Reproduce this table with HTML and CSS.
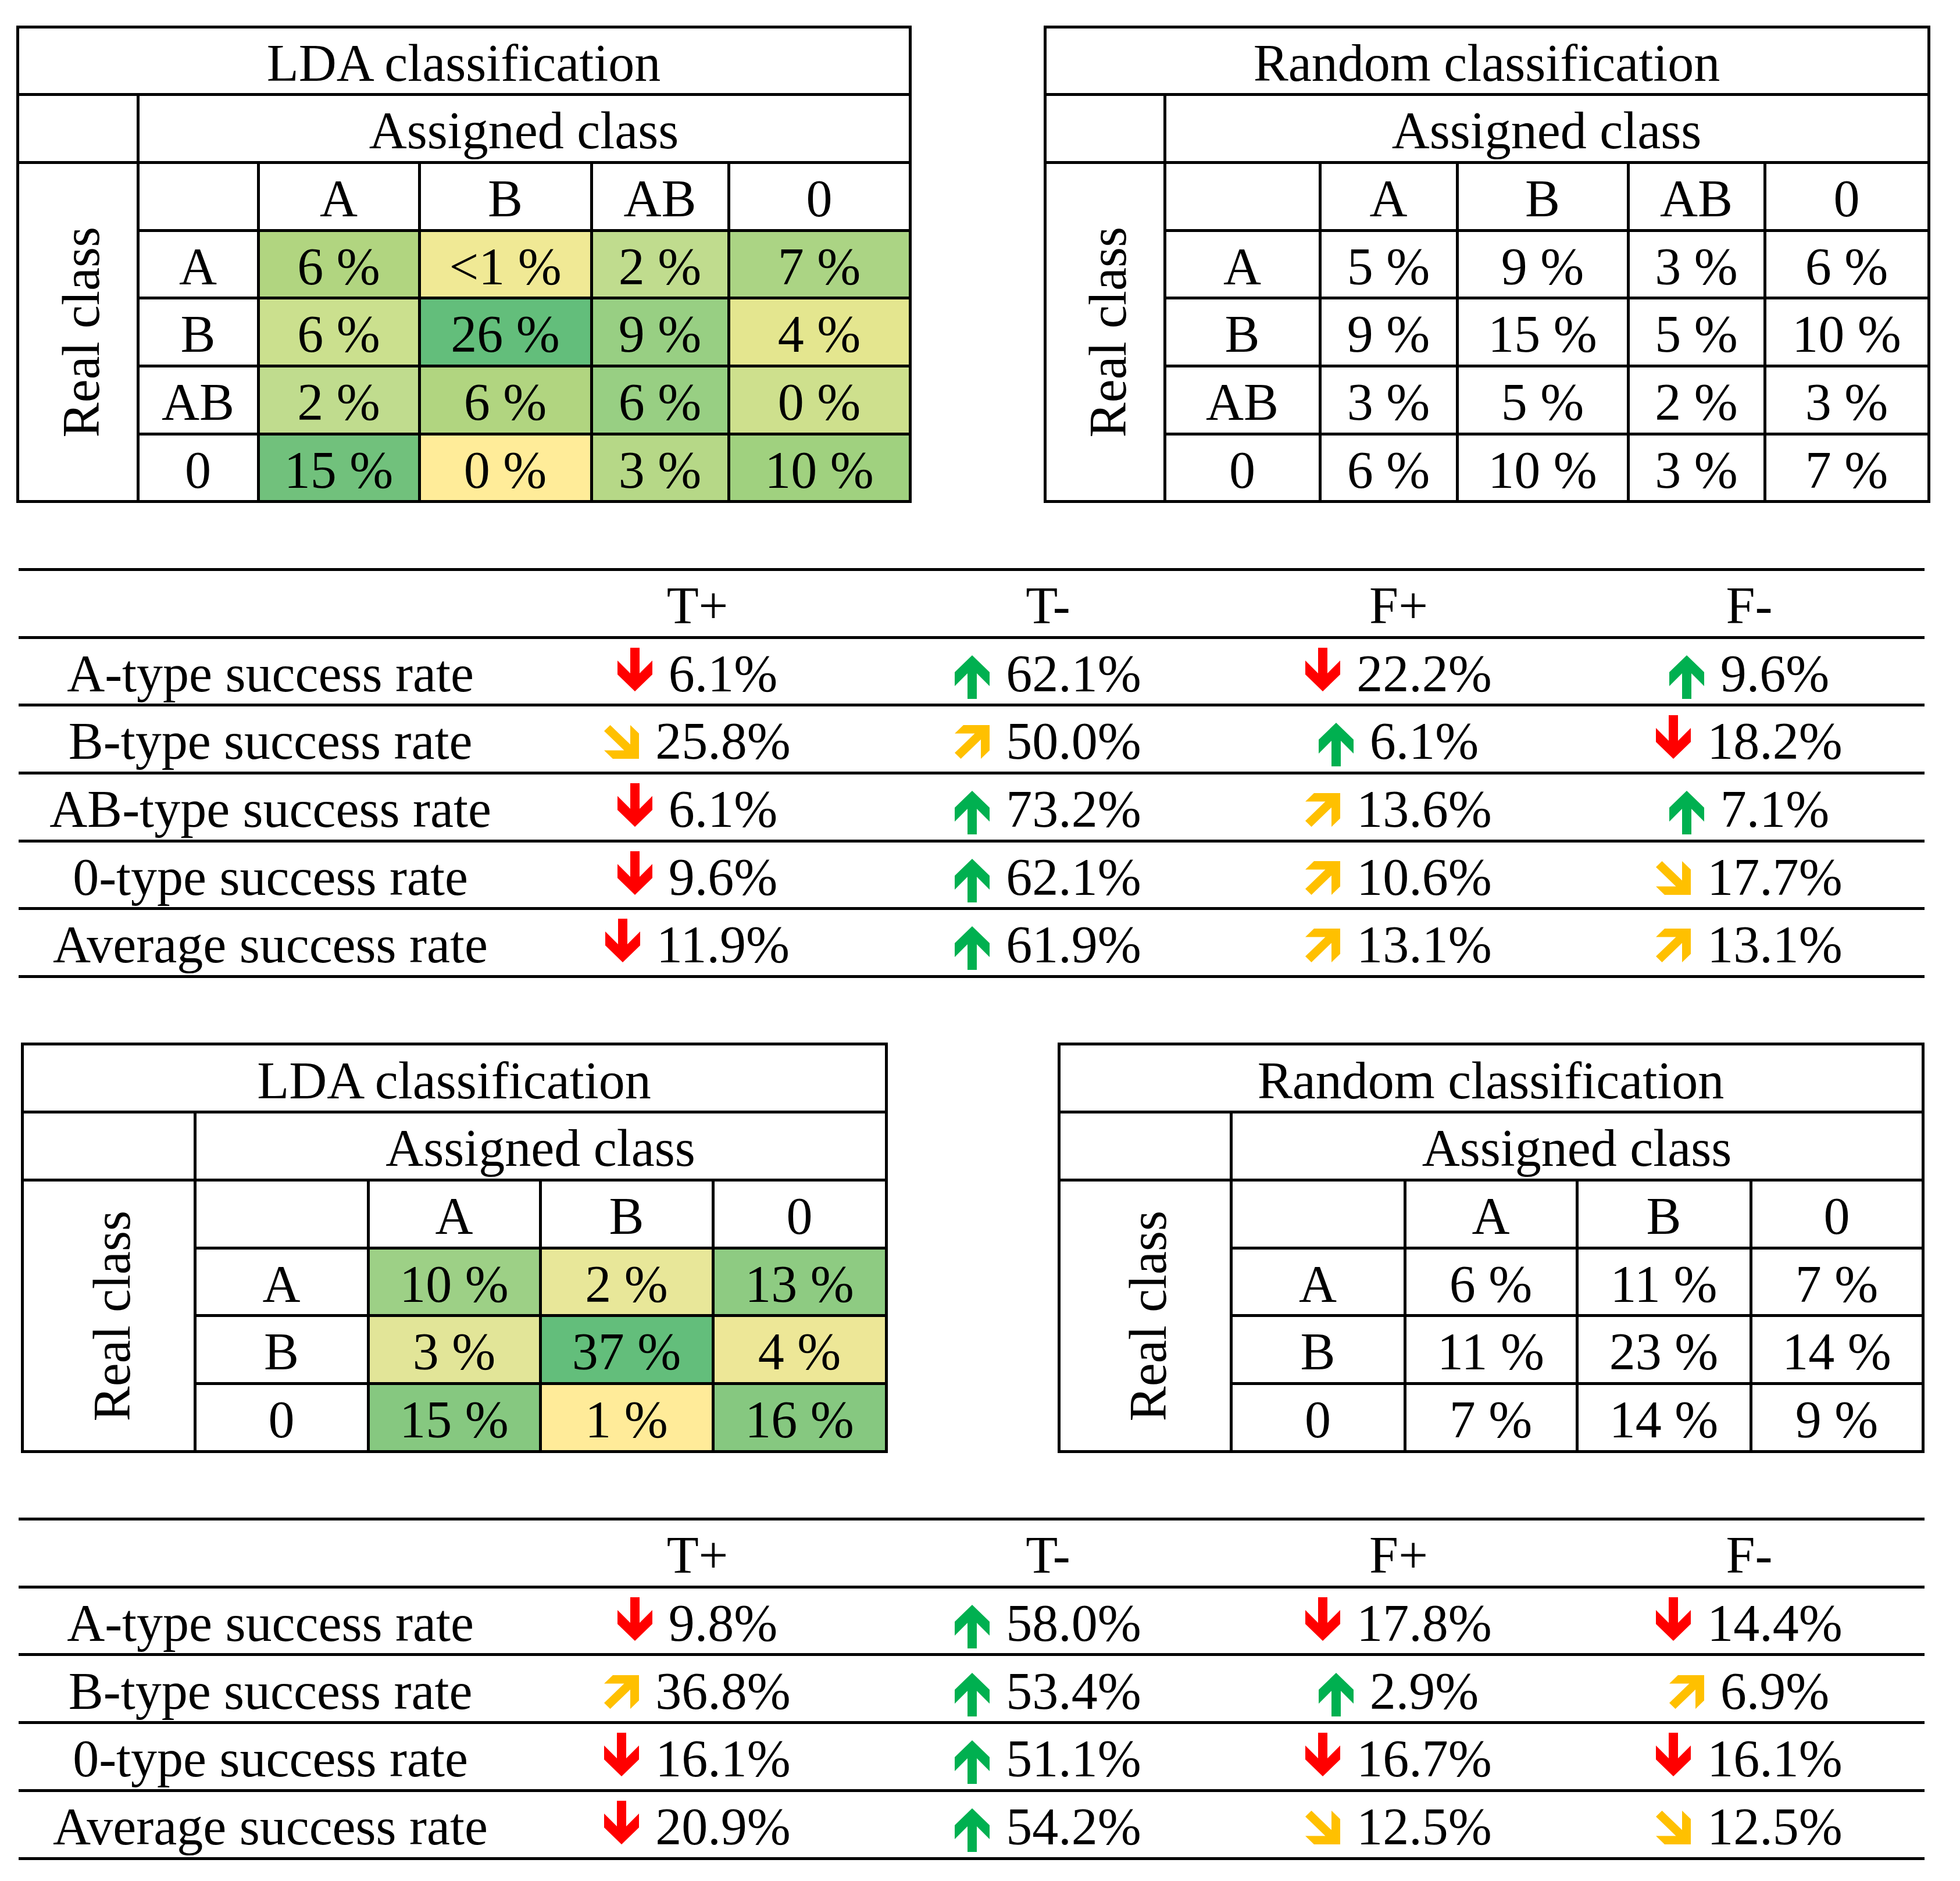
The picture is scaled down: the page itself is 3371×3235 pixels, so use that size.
FILE: index.html
```html
<!DOCTYPE html>
<html lang="en">
<head>
<meta charset="utf-8">
<title>Classification results</title>
<link rel="stylesheet" href="styles.css">
</head>
<body>
<svg class="defs" width="0" height="0" aria-hidden="true">
  <symbol id="a-dn" viewBox="0 0 60 75"><path d="M22 0H38V44L60 22V46L30 75L0 46V22L22 44Z"/></symbol>
  <symbol id="a-up" viewBox="0 0 60 75"><path d="M30 0L60 29V53L38 31V75H22V31L0 53V29Z"/></symbol>
  <symbol id="a-dr" viewBox="0 0 60 60" preserveAspectRatio="none"><path d="M10.5 0L45 34.5V0L60 15V60H15L0 45H34.5L0 10.5Z"/></symbol>
  <symbol id="a-ur" viewBox="0 0 60 60" preserveAspectRatio="none"><path d="M10.5 60L45 25.5V60L60 45V0H15L0 15H34.5L0 49.5Z"/></symbol>
</svg>

<main class="page">
  <section class="pair pair-top">
    <div class="matrix m4 lda1">
      <div class="c title">LDA classification</div>
      <div class="c blank"></div>
      <div class="c assigned">Assigned class</div>
      <div class="c real"><span>Real class</span></div>
      <div class="c"></div><div class="c">A</div><div class="c">B</div><div class="c">AB</div><div class="c">0</div>
      <div class="c">A</div><div class="c bg-b1d580">6 %</div><div class="c bg-f0e995">&lt;1 %</div><div class="c bg-c0dc8e">2 %</div><div class="c bg-abd484">7 %</div>
      <div class="c">B</div><div class="c bg-cbe08e">6 %</div><div class="c bg-63be7b">26 %</div><div class="c bg-98cf83">9 %</div><div class="c bg-e4e68f">4 %</div>
      <div class="c">AB</div><div class="c bg-c0dc8e">2 %</div><div class="c bg-b1d580">6 %</div><div class="c bg-98cf83">6 %</div><div class="c bg-cee08d">0 %</div>
      <div class="c">0</div><div class="c bg-71c17c">15 %</div><div class="c bg-ffec99">0 %</div><div class="c bg-b6d887">3 %</div><div class="c bg-a0d17f">10 %</div>
    </div>
    <div class="matrix m4 rnd1">
      <div class="c title">Random classification</div>
      <div class="c blank"></div>
      <div class="c assigned">Assigned class</div>
      <div class="c real"><span>Real class</span></div>
      <div class="c"></div><div class="c">A</div><div class="c">B</div><div class="c">AB</div><div class="c">0</div>
      <div class="c">A</div><div class="c">5 %</div><div class="c">9 %</div><div class="c">3 %</div><div class="c">6 %</div>
      <div class="c">B</div><div class="c">9 %</div><div class="c">15 %</div><div class="c">5 %</div><div class="c">10 %</div>
      <div class="c">AB</div><div class="c">3 %</div><div class="c">5 %</div><div class="c">2 %</div><div class="c">3 %</div>
      <div class="c">0</div><div class="c">6 %</div><div class="c">10 %</div><div class="c">3 %</div><div class="c">7 %</div>
    </div>
  </section>

  <section class="metrics m6">
    <div class="c"></div><div class="c">T+</div><div class="c">T-</div><div class="c">F+</div><div class="c">F-</div>

    <div class="c">A-type success rate</div>
    <div class="c"><span class="v"><svg class="ar dn"><use href="#a-dn"/></svg>6.1%</span></div>
    <div class="c"><span class="v"><svg class="ar up"><use href="#a-up"/></svg>62.1%</span></div>
    <div class="c"><span class="v"><svg class="ar dn"><use href="#a-dn"/></svg>22.2%</span></div>
    <div class="c"><span class="v"><svg class="ar up"><use href="#a-up"/></svg>9.6%</span></div>

    <div class="c">B-type success rate</div>
    <div class="c"><span class="v"><svg class="ar dr"><use href="#a-dr"/></svg>25.8%</span></div>
    <div class="c"><span class="v"><svg class="ar ur"><use href="#a-ur"/></svg>50.0%</span></div>
    <div class="c"><span class="v"><svg class="ar up"><use href="#a-up"/></svg>6.1%</span></div>
    <div class="c"><span class="v"><svg class="ar dn"><use href="#a-dn"/></svg>18.2%</span></div>

    <div class="c">AB-type success rate</div>
    <div class="c"><span class="v"><svg class="ar dn"><use href="#a-dn"/></svg>6.1%</span></div>
    <div class="c"><span class="v"><svg class="ar up"><use href="#a-up"/></svg>73.2%</span></div>
    <div class="c"><span class="v"><svg class="ar ur"><use href="#a-ur"/></svg>13.6%</span></div>
    <div class="c"><span class="v"><svg class="ar up"><use href="#a-up"/></svg>7.1%</span></div>

    <div class="c">0-type success rate</div>
    <div class="c"><span class="v"><svg class="ar dn"><use href="#a-dn"/></svg>9.6%</span></div>
    <div class="c"><span class="v"><svg class="ar up"><use href="#a-up"/></svg>62.1%</span></div>
    <div class="c"><span class="v"><svg class="ar ur"><use href="#a-ur"/></svg>10.6%</span></div>
    <div class="c"><span class="v"><svg class="ar dr"><use href="#a-dr"/></svg>17.7%</span></div>

    <div class="c">Average success rate</div>
    <div class="c"><span class="v"><svg class="ar dn"><use href="#a-dn"/></svg>11.9%</span></div>
    <div class="c"><span class="v"><svg class="ar up"><use href="#a-up"/></svg>61.9%</span></div>
    <div class="c"><span class="v"><svg class="ar ur"><use href="#a-ur"/></svg>13.1%</span></div>
    <div class="c"><span class="v"><svg class="ar ur"><use href="#a-ur"/></svg>13.1%</span></div>
  </section>

  <section class="pair pair-bottom">
    <div class="matrix m3 lda2">
      <div class="c title">LDA classification</div>
      <div class="c blank"></div>
      <div class="c assigned">Assigned class</div>
      <div class="c real"><span>Real class</span></div>
      <div class="c"></div><div class="c">A</div><div class="c">B</div><div class="c">0</div>
      <div class="c">A</div><div class="c bg-9dd086">10 %</div><div class="c bg-e8e799">2 %</div><div class="c bg-8ecb82">13 %</div>
      <div class="c">B</div><div class="c bg-e2e598">3 %</div><div class="c bg-63be7b">37 %</div><div class="c bg-ede797">4 %</div>
      <div class="c">0</div><div class="c bg-86c880">15 %</div><div class="c bg-ffeb99">1 %</div><div class="c bg-86c880">16 %</div>
    </div>
    <div class="matrix m3 rnd2">
      <div class="c title">Random classification</div>
      <div class="c blank"></div>
      <div class="c assigned">Assigned class</div>
      <div class="c real"><span>Real class</span></div>
      <div class="c"></div><div class="c">A</div><div class="c">B</div><div class="c">0</div>
      <div class="c">A</div><div class="c">6 %</div><div class="c">11 %</div><div class="c">7 %</div>
      <div class="c">B</div><div class="c">11 %</div><div class="c">23 %</div><div class="c">14 %</div>
      <div class="c">0</div><div class="c">7 %</div><div class="c">14 %</div><div class="c">9 %</div>
    </div>
  </section>

  <section class="metrics m5">
    <div class="c"></div><div class="c">T+</div><div class="c">T-</div><div class="c">F+</div><div class="c">F-</div>

    <div class="c">A-type success rate</div>
    <div class="c"><span class="v"><svg class="ar dn"><use href="#a-dn"/></svg>9.8%</span></div>
    <div class="c"><span class="v"><svg class="ar up"><use href="#a-up"/></svg>58.0%</span></div>
    <div class="c"><span class="v"><svg class="ar dn"><use href="#a-dn"/></svg>17.8%</span></div>
    <div class="c"><span class="v"><svg class="ar dn"><use href="#a-dn"/></svg>14.4%</span></div>

    <div class="c">B-type success rate</div>
    <div class="c"><span class="v"><svg class="ar ur"><use href="#a-ur"/></svg>36.8%</span></div>
    <div class="c"><span class="v"><svg class="ar up"><use href="#a-up"/></svg>53.4%</span></div>
    <div class="c"><span class="v"><svg class="ar up"><use href="#a-up"/></svg>2.9%</span></div>
    <div class="c"><span class="v"><svg class="ar ur"><use href="#a-ur"/></svg>6.9%</span></div>

    <div class="c">0-type success rate</div>
    <div class="c"><span class="v"><svg class="ar dn"><use href="#a-dn"/></svg>16.1%</span></div>
    <div class="c"><span class="v"><svg class="ar up"><use href="#a-up"/></svg>51.1%</span></div>
    <div class="c"><span class="v"><svg class="ar dn"><use href="#a-dn"/></svg>16.7%</span></div>
    <div class="c"><span class="v"><svg class="ar dn"><use href="#a-dn"/></svg>16.1%</span></div>

    <div class="c">Average success rate</div>
    <div class="c"><span class="v"><svg class="ar dn"><use href="#a-dn"/></svg>20.9%</span></div>
    <div class="c"><span class="v"><svg class="ar up"><use href="#a-up"/></svg>54.2%</span></div>
    <div class="c"><span class="v"><svg class="ar dr"><use href="#a-dr"/></svg>12.5%</span></div>
    <div class="c"><span class="v"><svg class="ar dr"><use href="#a-dr"/></svg>12.5%</span></div>
  </section>
</main>
</body>
</html>
```

FILE: styles.css
```css
html, body {
  margin: 0;
  padding: 0;
  background: #ffffff;
}

body {
  font-family: "Liberation Serif", "Times New Roman", serif;
  font-size: 90px;
  color: #000000;
  width: 3371px;
  min-height: 3235px;
}

.defs {
  position: absolute;
  width: 0;
  height: 0;
  overflow: hidden;
}

.page {
  display: flex;
  flex-direction: column;
  gap: 111.5px;
  padding-top: 43.5px;
}

/* ---------- confusion matrices ---------- */
.pair {
  display: flex;
  align-items: flex-start;
}

.pair-top {
  padding-left: 27.5px;
  gap: 227px;
}

.pair-bottom {
  padding-left: 35.5px;
  gap: 292px;
}

.matrix {
  display: grid;
  gap: 5px;
  padding: 5px;
  background: #000000;
}

.m4 { grid-template-rows: repeat(7, 111.7px); }
.m3 { grid-template-rows: repeat(6, 111.7px); }

.lda1 { grid-template-columns: 202px 202px 272px 291px 231px 307px; }
.rnd1 { grid-template-columns: 201px 262px 231px 289px 230px 277px; }
.lda2 { grid-template-columns: 292px 293px 291px 292px 293px; }
.rnd2 { grid-template-columns: 291px 294px 291px 294px 291px; }

.c {
  background: #ffffff;
  display: flex;
  align-items: center;
  justify-content: center;
  line-height: 1.15;
  white-space: nowrap;
  padding-top: 8px;
}

.matrix .title {
  grid-row: 1;
  grid-column: 1 / -1;
}

.matrix .blank {
  grid-row: 2;
  grid-column: 1;
}

.matrix .assigned {
  grid-row: 2;
  grid-column: 2 / -1;
}

.matrix .real {
  grid-row: 3 / -1;
  grid-column: 1;
  padding-top: 0;
  padding-left: 12px;
}

.real span {
  writing-mode: vertical-rl;
  transform: rotate(180deg);
  line-height: 1;
}

/* heat map colours */
.bg-63be7b { background: #63be7b; }
.bg-71c17c { background: #71c17c; }
.bg-86c880 { background: #86c880; }
.bg-8ecb82 { background: #8ecb82; }
.bg-98cf83 { background: #98cf83; }
.bg-9dd086 { background: #9dd086; }
.bg-a0d17f { background: #a0d17f; }
.bg-abd484 { background: #abd484; }
.bg-b1d580 { background: #b1d580; }
.bg-b6d887 { background: #b6d887; }
.bg-c0dc8e { background: #c0dc8e; }
.bg-cbe08e { background: #cbe08e; }
.bg-cee08d { background: #cee08d; }
.bg-e2e598 { background: #e2e598; }
.bg-e4e68f { background: #e4e68f; }
.bg-e8e799 { background: #e8e799; }
.bg-ede797 { background: #ede797; }
.bg-f0e995 { background: #f0e995; }
.bg-ffeb99 { background: #ffeb99; }
.bg-ffec99 { background: #ffec99; }

/* ---------- success-rate tables ---------- */
.metrics {
  display: grid;
  grid-template-columns: 866px repeat(4, 603px);
  row-gap: 5px;
  padding: 5px 0;
  background: #000000;
  width: 3278px;
  margin-left: 32px;
}

.m6 { grid-template-rows: repeat(6, 111.7px); }
.m5 { grid-template-rows: repeat(5, 111.7px); }

.v {
  display: block;
  line-height: 1.15;
}

.ar {
  width: 60px;
  margin-right: 28px;
}

.ar.dn {
  height: 75px;
  fill: #ff0000;
  vertical-align: 0;
}

.ar.up {
  height: 75px;
  fill: #00b050;
  vertical-align: -13px;
}

.ar.dr,
.ar.ur {
  height: 58px;
  fill: #ffc000;
  vertical-align: 0;
}
```
